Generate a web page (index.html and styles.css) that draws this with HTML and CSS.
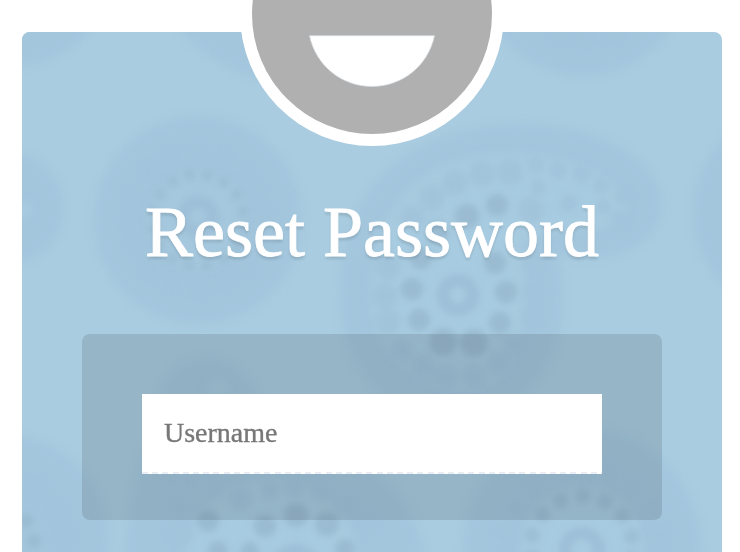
FILE: index.html
```
<!DOCTYPE html>
<html lang="en">
<head>
<meta charset="utf-8">
<title>Reset Password</title>
<link rel="stylesheet" href="styles.css">
</head>
<body>
<main class="card">
  <svg class="pattern" viewBox="22 32 700 520" aria-hidden="true">
    <g class="shapes">
      <ellipse cx="14" cy="-30" rx="98" ry="96"/>
      <circle cx="290" cy="-56" r="138"/>
      <circle cx="583" cy="-29" r="105"/>
      <ellipse cx="18" cy="208" rx="45" ry="53"/>
      <circle cx="198" cy="220" r="104"/>
      <circle cx="797" cy="212" r="104"/>
      <circle cx="4" cy="540" r="105"/>
      <path d="M160 445C145 385 175 357 208 358C244 359 264 391 264 430Q410 450 427 565H126Q126 495 145 450Z"/>
      <circle cx="582" cy="547" r="119"/>
      <path d="M340 295C340 185 410 124 520 124C600 124 662 160 662 205C662 247 610 267 558 254Q568 310 556 345C537 395 500 422 450 421C376 414 340 360 340 295Z"/>
    </g>
    <g class="hollows">
      <path d="M370 295C370 201 425 153 510 153C580 153 625 180 627 210C620 238 565 225 523 240Q530 330 513 359C492 396 458 395 431 383C388 363 370 340 370 295Z"/>
      <circle cx="198" cy="220" r="50" opacity=".6"/>
      <circle cx="582" cy="547" r="61"/>
      <circle cx="270" cy="570" r="90"/>
      <circle cx="24" cy="210" r="9"/>
      <circle cx="218" cy="388" r="10"/>
    </g>
    <g class="dots">
      <circle cx="412" cy="217" r="12"/><circle cx="432" cy="198" r="13"/><circle cx="455" cy="183" r="13"/><circle cx="482" cy="174" r="13"/><circle cx="510" cy="172" r="13"/>
      <circle cx="388" cy="267" r="13"/><circle cx="385" cy="296" r="13"/><circle cx="388" cy="322" r="13"/><circle cx="402" cy="350" r="12"/><circle cx="423" cy="366" r="13"/><circle cx="446" cy="377" r="13"/><circle cx="474" cy="376" r="13"/><circle cx="499" cy="363" r="13"/><circle cx="515" cy="345" r="12"/>
      <circle cx="536" cy="165" r="8"/><circle cx="558" cy="170" r="9"/><circle cx="581" cy="174" r="9"/><circle cx="601" cy="186" r="8"/><circle cx="623" cy="196" r="8"/><circle cx="619" cy="218" r="8"/><circle cx="603" cy="207" r="8"/><circle cx="538" cy="187" r="8"/><circle cx="569" cy="203" r="9"/><circle cx="531" cy="210" r="13"/>
      <circle cx="532" cy="265" r="9"/><circle cx="532" cy="292" r="9"/><circle cx="530" cy="318" r="9"/>
      <circle cx="171" cy="478" r="8"/><circle cx="191" cy="478" r="8"/><circle cx="214" cy="486" r="9"/><circle cx="240" cy="498" r="12"/><circle cx="270" cy="490" r="10"/><circle cx="294" cy="488" r="10"/><circle cx="322" cy="490" r="11"/><circle cx="346" cy="504" r="11"/><circle cx="177" cy="505" r="11"/><circle cx="180" cy="535" r="12"/><circle cx="365" cy="522" r="11"/>
      <circle cx="36" cy="489" r="11"/><circle cx="54" cy="510" r="11"/><circle cx="63" cy="536" r="11"/>
      <circle cx="560" cy="33" r="9"/><circle cx="585" cy="37" r="9"/><circle cx="613" cy="33" r="9"/>
      <circle class="ring ring-outer" cx="198" cy="220" r="67"/>
      <circle class="ring ring-wide" cx="582" cy="547" r="78"/>
    </g>
    <g class="dots dots-dark">
      <circle cx="497" cy="205" r="11"/><circle cx="467" cy="216" r="12"/><circle cx="437" cy="232" r="11"/><circle cx="421" cy="258" r="11"/><circle cx="412" cy="289" r="11"/><circle cx="419" cy="320" r="11"/><circle cx="443" cy="342" r="14"/><circle cx="474" cy="343" r="14"/><circle cx="500" cy="323" r="11"/><circle cx="506" cy="292" r="11"/><circle cx="495" cy="263" r="11"/>
      <circle cx="208" cy="521" r="11"/><circle cx="265" cy="526" r="11"/><circle cx="296" cy="515" r="12"/><circle cx="327" cy="524" r="12"/><circle cx="218" cy="551" r="10"/><circle cx="250" cy="551" r="9"/><circle cx="345" cy="549" r="10"/>
      <circle cx="26" cy="521" r="7"/><circle cx="34" cy="541" r="7"/>
      <circle class="ring ring-inner" cx="198" cy="220" r="46"/>
      <circle class="ring ring-mid" cx="582" cy="547" r="51"/>
      <circle class="core" cx="458" cy="295" r="15"/>
      <circle class="core" cx="198" cy="217" r="15"/>
      <circle class="core" cx="582" cy="550" r="17"/>
      <path class="core" d="M273 565Q295 535 317 565"/>
    </g>
  </svg>
  <div class="content">
    <svg class="avatar" viewBox="0 0 264 264" role="img" aria-label="Avatar">
      <circle cx="132" cy="132" r="132" fill="#fff"/>
      <circle cx="132" cy="132" r="120" fill="#b0b0b0"/>
      <path d="M69.5 153.7H194.5C188 184 162 204.500 132 204.500S76 184 69.500 153.700Z" fill="#fff" stroke="#d5dde2" stroke-width=".7"/>
    </svg>
    <h1 class="title">Reset Password</h1>
    <form class="panel">
      <input class="field" type="text" placeholder="Username" aria-label="Username">
    </form>
  </div>
</main>
</body>
</html>
```
FILE: styles.css
```
* { box-sizing: border-box; }
html { overflow: hidden; }
body {
  margin: 0;
  height: 552px;
  padding: 32px 18px 0 22px;
  overflow: hidden;
  background: #fff;
  font-family: "Liberation Serif", "Times New Roman", serif;
}
.card {
  display: grid;
  height: 520px;
  border-radius: 8px 8px 0 0;
  background: #a9cce0;
}
.pattern, .content { grid-area: 1 / 1; }
.pattern {
  width: 700px;
  height: 520px;
  overflow: hidden;
  border-radius: 8px 8px 0 0;
}
.shapes { fill: #a3c6dd; filter: blur(4px); }
.hollows { fill: #a9cce0; opacity: .75; filter: blur(5px); }
.dots { fill: #a2c4db; stroke: #a2c4db; stroke-width: 0; filter: blur(3px); }
.dots-dark { fill: #9abbd1; stroke: #9dbfd6; }
.ring { fill: none; stroke-linecap: round; }
.ring-outer { stroke-width: 18; stroke-dasharray: 0 26.31; }
.ring-inner { stroke: #9cbed4; stroke-width: 12; stroke-dasharray: 0 18.06; stroke-dashoffset: 9; }
.ring-wide { stroke-width: 20; stroke-dasharray: 0 27.23; stroke-dashoffset: 13; }
.ring-mid { stroke-width: 16; stroke-dasharray: 0 22.89; stroke-dashoffset: 11; }
.core { fill: none; stroke: #9ebfd7; stroke-width: 12; }
.content {
  position: relative;
  display: flex;
  flex-direction: column;
  align-items: center;
}
.avatar {
  flex: none;
  width: 264px;
  height: 264px;
  margin-top: -150px;
}
.title {
  margin: 45px 0 0;
  color: #fff;
  font-size: 72px;
  line-height: 83px;
  font-weight: 400;
  white-space: nowrap;
  -webkit-text-stroke: .8px #fff;
  text-shadow: 0 3px 3px rgba(0, 0, 0, .13);
}
.panel {
  width: 580px;
  height: 186px;
  margin-top: 60px;
  padding: 60px;
  border-radius: 8px;
  background: rgba(0, 0, 0, .11);
}
.field {
  display: block;
  width: 460px;
  height: 80px;
  padding: 0 22px 2px;
  border: 0;
  border-radius: 0;
  outline: 0;
  background: repeating-linear-gradient(90deg, #e8eef3 0 6px, #fff 6px 10.2px) bottom / 100% 2px no-repeat #fff;
  color: #777;
  font: 28px "Liberation Serif", "Times New Roman", serif;
}
.field::placeholder {
  color: #777;
  opacity: 1;
  -webkit-text-stroke: .35px #777;
}
```
